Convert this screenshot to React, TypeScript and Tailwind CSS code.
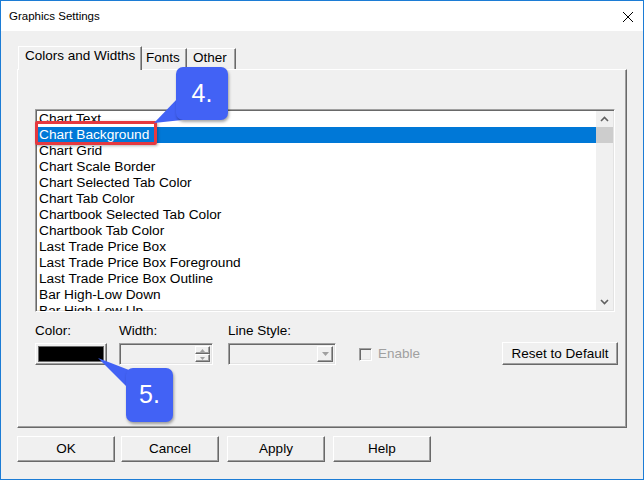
import React from "react";

const ITEMS = [
  "Chart Text",
  "Chart Background",
  "Chart Grid",
  "Chart Scale Border",
  "Chart Selected Tab Color",
  "Chart Tab Color",
  "Chartbook Selected Tab Color",
  "Chartbook Tab Color",
  "Last Trade Price Box",
  "Last Trade Price Box Foreground",
  "Last Trade Price Box Outline",
  "Bar High-Low Down",
  "Bar High-Low Up",
];

// classic raised 3D edge
const RAISED =
  "border border-t-white border-l-white border-r-[#696969] border-b-[#696969] shadow-[inset_-1px_-1px_0_#a0a0a0]";
// classic sunken 3D edge
const SUNKEN =
  "border border-t-[#a0a0a0] border-l-[#a0a0a0] border-r-white border-b-white shadow-[inset_1px_1px_0_#696969,inset_-1px_-1px_0_#e3e3e3]";

function Button({ label, className = "" }: { label: string; className?: string }) {
  return (
    <div
      className={`flex h-[26px] w-[98px] items-center justify-center bg-[#f0f0f0] text-[13.5px] ${RAISED} ${className}`}
    >
      {label}
    </div>
  );
}

function Chevron({ up }: { up?: boolean }) {
  return (
    <svg width="9" height="6" viewBox="0 0 9 6" className="block">
      <path
        d={up ? "M1 5 L4.5 1.5 L8 5" : "M1 1 L4.5 4.5 L8 1"}
        fill="none"
        stroke="#606060"
        strokeWidth="1.6"
      />
    </svg>
  );
}

function Callout({
  label,
  box,
  tail,
}: {
  label: string;
  box: string;
  tail: string;
}) {
  return (
    <>
      <svg className="pointer-events-none absolute left-0 top-0" width="644" height="480">
        <polygon points={tail} fill="#4262f5" />
      </svg>
      <div
        className={`absolute flex items-center justify-center rounded-[7px] bg-[#4262f5] text-[25px] text-white shadow-[1px_2px_3px_rgba(0,0,0,0.35)] ${box}`}
      >
        {label}
      </div>
    </>
  );
}

export default function App() {
  return (
    <div className="relative flex h-[480px] w-[644px] flex-col overflow-hidden border border-[#1c7cd5] bg-[#f0f0f0] font-['Liberation_Sans','Arial',sans-serif] text-black">
      {/* Title bar */}
      <div className="flex h-[30px] items-center justify-between bg-white pl-[8px] pr-[10px] pt-[1px] text-[11.5px]">
        <span>Graphics Settings</span>
        <svg width="10" height="10" viewBox="0 0 10 10">
          <path d="M0 0 L10 10 M10 0 L0 10" stroke="#000" strokeWidth="1" />
        </svg>
      </div>

      <div className="flex flex-col pl-[16px]">
        {/* Tabs */}
        <div className="mt-[15px] flex h-[23px] items-end pl-[1px] text-[13.5px] leading-[16px]">
          <div className="relative z-10 -mb-px h-[24px] w-[124px] border-l border-r border-t border-white border-r-[#696969] bg-[#f0f0f0] pl-[6px] pt-[1px] shadow-[inset_-1px_0_0_#a0a0a0]">
            Colors and Widths
          </div>
          <div className="h-[21px] w-[45px] border-r border-t border-t-white border-r-[#696969] pl-[4px] pt-[1px] shadow-[inset_-1px_0_0_#a0a0a0]">
            Fonts
          </div>
          <div className="h-[21px] w-[49px] border-r border-t border-t-white border-r-[#696969] pl-[6px] pt-[1px] shadow-[inset_-1px_0_0_#a0a0a0]">
            Other
          </div>
        </div>

        {/* Tab panel */}
        <div className="flex h-[359px] w-[610px] flex-col border border-t-white border-l-white border-r-[#696969] border-b-[#696969] shadow-[inset_-1px_-1px_0_#a0a0a0]">
          {/* List box */}
          <div className={`ml-[17px] mt-[39px] flex h-[203px] w-[580px] bg-white ${SUNKEN}`}>
            <div className="flex-1 overflow-hidden pt-[1px] text-[13.7px] leading-[16px]">
              {ITEMS.map((item) => (
                <div
                  key={item}
                  className={`h-[16px] whitespace-nowrap pl-[3px] ${
                    item === "Chart Background" ? "bg-[#0078d7] text-white" : ""
                  }`}
                >
                  {item}
                </div>
              ))}
            </div>
            <div className="my-[1px] mr-[1px] flex w-[17px] flex-col bg-[#f0f0f0]">
              <div className="flex h-[16px] items-center justify-center">
                <Chevron up />
              </div>
              <div className="h-[16px] bg-[#cdcdcd]" />
              <div className="flex-1" />
              <div className="flex h-[16px] items-center justify-center">
                <Chevron />
              </div>
            </div>
          </div>

          {/* Controls */}
          <div className="ml-[17px] mt-[11px] flex items-end text-[13.5px] leading-[16px]">
            <div className="flex w-[72px] flex-col gap-[4px]">
              <span>Color:</span>
              <div className={`h-[22px] w-[72px] bg-[#f0f0f0] p-[2px] ${RAISED}`}>
                <div className="h-full w-full border border-[#696969] bg-black" />
              </div>
            </div>
            <div className="ml-[12px] flex w-[94px] flex-col gap-[4px]">
              <span>Width:</span>
              <div className={`flex h-[22px] w-[94px] justify-end bg-[#f0f0f0] p-[2px] ${SUNKEN}`}>
                <div className="flex w-[15px] flex-col">
                  <div className={`flex flex-1 items-center justify-center ${RAISED}`}>
                    <svg width="5" height="3" viewBox="0 0 5 3">
                      <path d="M0 3 L2.5 0 L5 3 Z" fill="#a0a0a0" />
                    </svg>
                  </div>
                  <div className={`flex flex-1 items-center justify-center ${RAISED}`}>
                    <svg width="5" height="3" viewBox="0 0 5 3">
                      <path d="M0 0 L2.5 3 L5 0 Z" fill="#a0a0a0" />
                    </svg>
                  </div>
                </div>
              </div>
            </div>
            <div className="ml-[15px] flex w-[108px] flex-col gap-[4px]">
              <span>Line Style:</span>
              <div className={`flex h-[22px] w-[108px] justify-end bg-[#f0f0f0] p-[2px] ${SUNKEN}`}>
                <div className={`flex w-[16px] items-center justify-center ${RAISED}`}>
                  <svg width="7" height="4" viewBox="0 0 7 4">
                    <path d="M0 0 L3.5 4 L7 0 Z" fill="#a0a0a0" />
                  </svg>
                </div>
              </div>
            </div>
            <div className="ml-[23px] flex h-[22px] items-center gap-[6px] text-[#a0a0a0]">
              <div className={`h-[13px] w-[13px] bg-[#f0f0f0] ${SUNKEN}`} />
              <span>Enable</span>
            </div>
            <div
              className={`ml-auto mr-[8px] flex h-[23px] w-[116px] items-center justify-center bg-[#f0f0f0] ${RAISED}`}
            >
              Reset to Default
            </div>
          </div>
        </div>

        {/* Dialog buttons */}
        <div className="mt-[8px] flex">
          <Button label="OK" />
          <Button label="Cancel" className="ml-[6px]" />
          <Button label="Apply" className="ml-[8px]" />
          <Button label="Help" className="ml-[8px]" />
        </div>
      </div>

      {/* Annotation: red highlight */}
      <div className="absolute left-[34px] top-[120px] h-[24px] w-[122px] rounded-[2px] border-[3px] border-[#e5393f] shadow-[1px_1px_3px_rgba(0,0,0,0.3)]" />

      {/* Annotation callouts */}
      <Callout
        label="4."
        box="left-[175px] top-[66px] h-[53px] w-[52px]"
        tail="177,97 153,122 200,117"
      />
      <Callout
        label="5."
        box="left-[125px] top-[367px] h-[54px] w-[47px]"
        tail="97,357 128,369 128,388"
      />
    </div>
  );
}
